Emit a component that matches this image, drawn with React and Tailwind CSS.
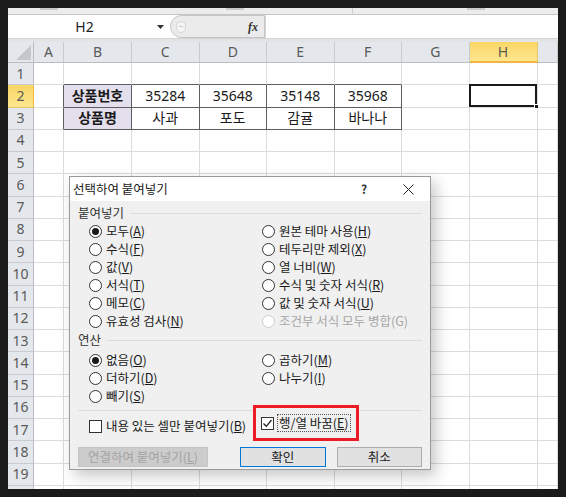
import React from 'react'

const COLS = ['A', 'B', 'C', 'D', 'E', 'F', 'G', 'H', '']
const GRID = 'grid grid-cols-[26px_30px_68px_67.5px_67.5px_67.5px_67.5px_67.5px_68px_1fr]'

const TABLE = {
  2: ['상품번호', '35284', '35648', '35148', '35968'],
  3: ['상품명', '사과', '포도', '감귤', '바나나'],
}

const Mn = ({ before, k, after = ')' }) => (
  <span>
    {before}(<u>{k}</u>{after}
  </span>
)

const Radio = ({ checked, disabled, children }) => (
  <div className="flex items-center h-[18px] gap-[4px]">
    <span
      className={`w-[13px] h-[13px] rounded-full border flex items-center justify-center bg-white ${
        disabled ? 'border-[#cccccc]' : 'border-[#333333]'
      }`}
    >
      {checked && <span className="w-[7px] h-[7px] rounded-full bg-[#1a1a1a]" />}
    </span>
    <span className={disabled ? 'text-[#a6a6a6]' : 'text-[#1a1a1a]'}>{children}</span>
  </div>
)

const Checkbox = ({ checked }) => (
  <span className="w-[13px] h-[13px] border border-[#333333] bg-white flex items-center justify-center">
    {checked && (
      <svg width="11" height="11" viewBox="0 0 11 11">
        <path d="M1.5 5.5 L4.3 8.3 L9.5 2" fill="none" stroke="#222" strokeWidth="1.3" />
      </svg>
    )}
  </span>
)

const SectionLabel = ({ children }) => (
  <div className="flex items-center h-[16px] gap-[6px]">
    <span className="text-[#333333]">{children}</span>
    <div className="flex-1 h-px bg-[#dcdcdc]" />
  </div>
)

const PasteDialog = () => (
  <div className="absolute left-[61px] top-[168px] w-[362px] h-[294px] border border-[#9a9a9a] bg-[#f0f0f0] shadow-[5px_6px_14px_rgba(0,0,0,0.22)] font-['Noto_Sans_CJK_KR','Noto_Sans',sans-serif] text-[12.5px] leading-none">
    {/* Title bar */}
    <div className="h-[24px] bg-white flex items-center pl-[3px] relative">
      <span className="text-[12.5px] text-[#1a1a1a]">선택하여 붙여넣기</span>
      <span className="absolute left-[291px] top-[6px] text-[12px] font-bold text-[#333]">?</span>
      <svg className="absolute left-[333px] top-[7px]" width="11" height="11" viewBox="0 0 11 11">
        <path d="M0.5 0.5 L10.5 10.5 M10.5 0.5 L0.5 10.5" stroke="#222" strokeWidth="1" />
      </svg>
    </div>

    <div className="px-[8px] pt-[4px]">
      <SectionLabel>붙여넣기</SectionLabel>
      <div className="grid grid-cols-[173px_1fr] pl-[11px] mt-[1px]">
        <div>
          <Radio checked><Mn before="모두" k="A" /></Radio>
          <Radio><Mn before="수식" k="F" /></Radio>
          <Radio><Mn before="값" k="V" /></Radio>
          <Radio><Mn before="서식" k="T" /></Radio>
          <Radio><Mn before="메모" k="C" /></Radio>
          <Radio><Mn before="유효성 검사" k="N" /></Radio>
        </div>
        <div>
          <Radio><Mn before="원본 테마 사용" k="H" /></Radio>
          <Radio><Mn before="테두리만 제외" k="X" /></Radio>
          <Radio><Mn before="열 너비" k="W" /></Radio>
          <Radio><Mn before="수식 및 숫자 서식" k="R" /></Radio>
          <Radio><Mn before="값 및 숫자 서식" k="U" /></Radio>
          <Radio disabled>조건부 서식 모두 병합(G)</Radio>
        </div>
      </div>

      <div className="mt-[2px]">
        <SectionLabel>연산</SectionLabel>
      </div>
      <div className="grid grid-cols-[173px_1fr] pl-[11px] mt-[3px]">
        <div>
          <Radio checked><Mn before="없음" k="O" /></Radio>
          <Radio><Mn before="더하기" k="D" /></Radio>
          <Radio><Mn before="빼기" k="S" /></Radio>
        </div>
        <div>
          <Radio><Mn before="곱하기" k="M" /></Radio>
          <Radio><Mn before="나누기" k="I" /></Radio>
        </div>
      </div>

      <div className="h-px bg-[#dcdcdc] mt-[5px]" />

      <div className="h-[22px] mt-[4px] pl-[11px] flex items-center gap-[4px]">
        <Checkbox />
        <span className="text-[#1a1a1a]"><Mn before="내용 있는 셀만 붙여넣기" k="B" /></span>
      </div>

      {/* Buttons */}
      <div className="flex mt-[10px] h-[20px]">
        <div className="w-[131px] h-[20px] bg-[#cccccc] border border-[#c4c4c4] flex items-center justify-center text-[#a3a3a3]">
          <Mn before="연결하여 붙여넣기" k="L" />
        </div>
        <div className="ml-[32px] w-[86px] h-[20px] bg-[#e1e1e1] border border-[#0078d7] flex items-center justify-center text-[#1a1a1a]">
          확인
        </div>
        <div className="ml-[11px] w-[86px] h-[20px] bg-[#e1e1e1] border border-[#adadad] flex items-center justify-center text-[#1a1a1a]">
          취소
        </div>
      </div>
    </div>

    {/* Highlight annotation */}
    <div className="absolute left-[183px] top-[228px] w-[106px] h-[36px] border-[3px] border-[#ec1c24] bg-[#f0f0f0] flex items-center pl-[5px] gap-[3px]">
      <Checkbox checked />
      <span className="border border-dotted border-[#555] px-[1px] py-[2px] text-[#1a1a1a]">
        <Mn before="행/열 바꿈" k="E" />
      </span>
    </div>
  </div>
)

const HeaderRow = () => (
  <div className={`${GRID} h-[21px]`}>
    <div className="bg-[#e4e7eb] border-r border-b border-[#b9bcc1] relative">
      <div className="absolute right-[2px] bottom-[2px] w-0 h-0 border-l-[15px] border-l-transparent border-b-[15px] border-b-[#c4c7cb]" />
    </div>
    {COLS.map((c, i) =>
      c === 'H' ? (
        <div
          key={i}
          className="bg-gradient-to-b from-[#f9d665] to-[#fde68e] border-r border-b-2 border-r-[#e3c469] border-b-[#f0b640] flex items-center justify-center text-[#5a5a5a]"
        >
          {c}
        </div>
      ) : (
        <div
          key={i}
          className="bg-[#e4e7eb] border-r border-b border-r-[#c8cbd0] border-b-[#b9bcc1] flex items-center justify-center text-[#5a5a5a]"
        >
          {c}
        </div>
      )
    )}
  </div>
)

const SheetRow = ({ n, label = true }) => {
  const data = TABLE[n]
  return (
    <div className={`${GRID} h-[22.25px]`}>
      <div
        className={`border-r border-b flex items-center justify-center ${
          n === 2
            ? 'bg-gradient-to-b from-[#f9d665] to-[#fde68e] border-r-[#f0b640] border-b-[#e3c469] text-[#5a5a5a]'
            : 'bg-[#e4e7eb] border-r-[#b9bcc1] border-b-[#c8cbd0] text-[#5a5a5a]'
        }`}
      >
        {label ? n : null}
      </div>
      {COLS.map((c, i) => {
        const tIdx = i - 1
        const inTable = data && tIdx >= 0 && tIdx < 5
        const aboveTable = n === 1 && tIdx >= 0 && tIdx < 5
        const leftOfTable = data && i === 0
        let cls = 'border-r border-b border-r-[#dadcdd] border-b-[#dadcdd]'
        if (inTable) cls = 'border-r border-b border-r-[#5e5e5e] border-b-[#5e5e5e]'
        if (aboveTable) cls = 'border-r border-b border-r-[#dadcdd] border-b-[#5e5e5e]'
        if (leftOfTable) cls = 'border-r border-b border-r-[#5e5e5e] border-b-[#dadcdd]'
        return (
          <div
            key={i}
            className={`${cls} relative flex items-center justify-center ${
              inTable && tIdx === 0 ? 'bg-[#e4dfec] font-bold' : 'bg-white'
            } text-[#1a1a1a]`}
          >
            {inTable ? data[tIdx] : null}
            {n === 2 && c === 'H' && (
              <div className="absolute -left-[1px] -top-[1px] right-0 bottom-0 border-2 border-[#1a1a1a]">
                <div className="absolute -right-[4px] -bottom-[4px] w-[5px] h-[5px] bg-[#1a1a1a] border border-white" />
              </div>
            )}
          </div>
        )
      })}
    </div>
  )
}

export default function App() {
  const rows = Array.from({ length: 19 }, (_, i) => i + 1)
  return (
    <div className="w-[566px] h-[497px] bg-[#1b1b1b] pt-[8px] pl-[8px]">
      <div className="w-[550px] h-[481px] bg-white overflow-hidden relative font-['Noto_Sans','Noto_Sans_CJK_KR',sans-serif] text-[14px] leading-none">
        {/* Ribbon remnant */}
        <div className="h-[7px] bg-[#ececec] border-b border-[#c5c5c5] relative">
          <div className="absolute left-[32px] top-0 w-[18px] h-[2px] bg-[#c9c9c9]" />
          <div className="absolute left-[218px] top-0 w-[18px] h-[2px] bg-[#c9c9c9]" />
          <div className="absolute left-[344px] top-0 w-px h-[6px] bg-[#d0d0d0]" />
          <div className="absolute left-[459px] top-0 w-[18px] h-[2px] bg-[#c9c9c9]" />
        </div>

        {/* Formula bar */}
        <div className="h-[23px] flex bg-white">
          <div className="w-[162px] flex items-center relative">
            <span className="flex-1 text-center text-[14px] text-[#222] pl-[4px]">H2</span>
            <svg className="mr-[6px]" width="7" height="4" viewBox="0 0 7 4">
              <path d="M0 0 H7 L3.5 4 Z" fill="#333" />
            </svg>
          </div>
          <div className="w-[95px] h-[23px] bg-[#ebebeb] border border-[#c6c6c6] rounded-l-[12px] flex items-center justify-between pl-[5px] pr-[6px]">
            <span className="w-[10px] h-[12px] rounded-full bg-[#f4f4f4] border border-[#d6d6d6] flex items-center justify-center">
              <span className="w-[4px] h-px bg-[#c8c8c8]" />
            </span>
            <span className="font-['Liberation_Serif',serif] italic font-bold text-[12px] text-[#333]">fx</span>
          </div>
          <div className="flex-1 border-l border-[#d4d4d4]" />
        </div>
        <div className="h-[4px] bg-[#e3e4e6] border-t border-[#d0d2d5]" />

        <HeaderRow />
        {rows.map((n) => (
          <SheetRow key={n} n={n} />
        ))}
        <SheetRow n={20} label={false} />

        <PasteDialog />
      </div>
    </div>
  )
}
